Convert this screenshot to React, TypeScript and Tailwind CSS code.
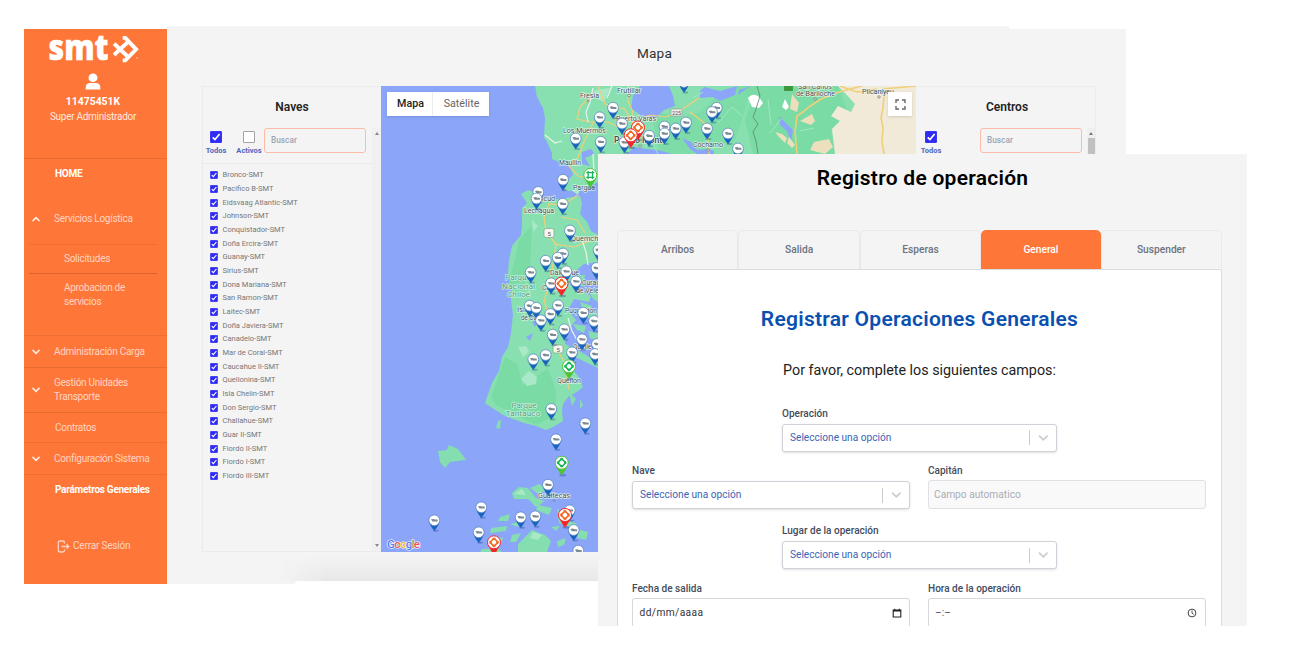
import React from "react";

const ships = [
  "Bronco-SMT", "Pacifico B-SMT", "Eidsvaag Atlantic-SMT", "Johnson-SMT", "Conquistador-SMT",
  "Doña Ercira-SMT", "Guanay-SMT", "Sirius-SMT", "Dona Mariana-SMT", "San Ramon-SMT", "Laitec-SMT",
  "Doña Javiera-SMT", "Canadelo-SMT", "Mar de Coral-SMT", "Caucahue II-SMT", "Quellonina-SMT",
  "Isla Chelin-SMT", "Don Sergio-SMT", "Challahue-SMT", "Guar II-SMT", "Fiordo II-SMT", "Fiordo I-SMT",
  "Fiordo III-SMT",
];

const pins: [number, number][] = [
  [684, 82], [613, 107.7], [716.7, 107.7], [712, 112], [599.7, 117.3], [622, 123.5], [686, 122.5],
  [664.5, 126.5], [675.7, 128.5], [707, 128.5], [664.5, 133.5], [728, 133.5], [649, 135.7],
  [575.7, 138.5], [600.7, 141.8], [624.5, 142.3], [738, 148.5], [563, 179.7], [538.3, 192],
  [536.5, 198.5], [562.7, 203.7], [570, 230.5], [598.5, 250], [563, 253.5], [557.7, 257.7],
  [545.7, 260.7], [596.5, 268], [566.3, 271.3], [530.7, 272.3], [576, 281.3], [551, 283.3],
  [558, 305.3], [529.7, 305.7], [536.3, 307.7], [583.3, 312.7], [550.3, 314], [541, 320.3],
  [594, 321], [564.3, 329.3], [552.7, 334.7], [582, 339.3], [597, 344], [572, 352.3], [595, 354],
  [545.7, 355], [533.3, 359.3], [551.3, 409], [585.3, 423.3], [556, 439.3], [548, 484.7],
  [481.3, 507.3], [569.7, 510.3], [535.3, 516.3], [520.7, 517.3], [434.3, 520.3], [573.7, 530],
  [478.7, 532.3], [578.3, 550.7],
];

const bigPins: [number, number, string][] = [
  [638, 127.5, "red"], [630.7, 135.3, "red"], [561.5, 283.5, "red"], [565, 515, "red"],
  [494, 542.3, "red"], [569, 366.3, "green"], [561.7, 462.7, "green"], [590.3, 175, "square"],
];

const labels: [number, number, string, number][] = [
  [580, 98, "Fresia", 19], [617, 93, "Frutillar", 24], [563, 133, "Los Muermos", 43],
  [616, 121, "Puerto Varas", 40], [559, 165, "Maullin", 22], [573, 190, "Pargua", 22],
  [535, 201, "Ancud", 20], [524, 213, "Lechagua", 30], [571, 241, "Quemchi", 29],
  [550, 275, "Dalcahue", 29], [542, 290, "Castro", 20], [582, 285, "Curaco", 22],
  [576, 293, "de Velez", 26], [517, 312, "Isla", 12], [521, 320, "de Cucao", 26],
  [565, 313, "Puqueldon", 32], [573, 349, "Queilen", 22], [557, 383, "Quellon", 24],
  [538, 498, "Guaitecas", 32], [693, 147, "Cochamo", 30], [798, 88.5, "San Carlos", 34],
  [796, 96, "de Bariloche", 39], [862, 94, "Pilcaniyeu", 32],
];

function Pin({ x, y }: { x: number; y: number }) {
  return (
    <g transform={`translate(${x} ${y})`}>
      <ellipse cx="1.5" cy="10.5" rx="3" ry="1" fill="#26437a" opacity=".35" />
      <path d="M-5.5 1Q-4.5 5 0 10.8Q4.5 5 5.5 1Z" fill="#1763bd" />
      <circle r="5.4" fill="#fff" stroke="#5d89c2" strokeWidth=".8" />
      <path d="M-3.4 -1L-1 -1.4L1 -.8L3.4 -.8V1.2H-1.8Z" fill="#7c8a91" />
    </g>
  );
}

function BigPin({ x, y, kind }: { x: number; y: number; kind: string }) {
  const edge = kind === "red" ? "#f3262b" : "#4cc437";
  const mark = kind === "red" ? "#f26922" : "#13b657";
  return (
    <g transform={`translate(${x} ${y})`}>
      <ellipse cx="1" cy="12.5" rx="3.5" ry="1.2" fill="#26437a" opacity=".35" />
      <path d="M-6.6 1Q-5 6 0 12.8Q5 6 6.6 1Z" fill={edge} />
      <circle r="6.5" fill="#fff" stroke={edge} strokeWidth="1" />
      {kind === "square" ? (
        <path d="M-2.2 -4V4M2.2 -4V4M-4 -2.4H4M-4 2.4H4" stroke={mark} strokeWidth="1.3" fill="none" />
      ) : (
        <g fill="none" stroke={mark}>
          <path d="M0 -4L4 0L0 4L-4 0Z" strokeWidth="1.6" />
          <path d="M-3.4 -1.4V1.4M3.4 -1.4V1.4M-1.4 -3.4H1.4M-1.4 3.4H1.4" strokeWidth="2" />
        </g>
      )}
    </g>
  );
}

function MapDrawing() {
  return (
    <svg className="block h-[466px] w-[535px]" viewBox="381 86 535 466">
      <rect x="381" y="86" width="535" height="466" fill="#8ba5f9" />
      <path d="M535 86L537 97L543 108L545 118L544 137L547 142L552 153L552 159L559 162L566 160L570 165L573 175L567 181L560 185L566 191L583 190L598 182L612 160L840 160L916 160V86Z" fill="#88e0b0" />
      <path d="M735 86L752 100L745 120L753 154H835L831 130L848 112L838 86Z" fill="#7adba5" />
      <path d="M838 86L845 93L855 104L851 112L838 106L831 116L840 121L832 129L835 154H916V86Z" fill="#f1ead8" />
      <path d="M650 110L680 118L700 112L723 90L750 86L745 110L735 140L690 154H660Z" fill="#79dba5" opacity=".75" />
      <g fill="#8ba5f9">
        <path d="M633 96L640 86H669L673 96L675 106L664 110L656 118L643 117L631 108Z" />
        <path d="M700 91L704 87L720 91L737 86L735 95L720 101L713 97L700 98Z" />
        <path d="M627 154L634 147L647 149L658 150L672 154Z" />
        <path d="M682 138L691 142L697 150L708 149L714 151V154H697L690 149Z" />
        <path d="M779 116L786 123L793 130L791 141L787 131L780 125Z" />
        <path d="M582 152L591 149L594 153L592 155L585 158L590 166L582 164Z" />
        <path d="M739 90L752 86L746 89L738 95Z" />
      </g>
      <path d="M748 98Q753 92 759 97L763 103L759 108L752 107Z" fill="#fff" />
      <path d="M785 99L789 107L786 110L782 107Z" fill="#fff" />
      <g fill="#ecdfbc">
        <path d="M792 94L799 103L797 112L790 109Z" />
        <path d="M812 114L815 121L811 125L800 121Z" />
        <path d="M775 132L782 134L787 138L785 143L779 137Z" />
        <path d="M789 137L795 145L792 148L787 143Z" />
        <path d="M814 142L829 139L833 147L825 154L810 150Z" />
      </g>
      <path d="M521 194L528 190L536 193L541 200L552 200L566 198L580 196L582 204L580 214L587 222L591 231L598 235V249L593 251L598 262L584 264L573 273L570 285L580 290L591 296L589 302L574 299L568 310L576 320L565 333L565 344L579 351L598 362V368L573 356L570 367L578 376L583 387L577 392L569 396L563 404L562 410L563 421L553 427L546 430L536 426L524 423L513 419L503 415L491 407L485 403L492 383L499 371L502 357L508 347L511 333L513 315L511 300L512 285L508 273L509 260L512 246L521 235L522 225L522 208L527 203Z" fill="#88e0b0" />
      <path d="M508 285L515 260L519 240L532 225L530 267L518 300ZM505 357L518 365L522 385L548 369L556 390L555 415L536 425L496 405L491 397Z" fill="#7adba5" />
      <g fill="#aae9c8">
        <path d="M518 347L526 346L529 352L523 357Z" />
        <path d="M529 371L537 377L536 384L527 386L521 379Z" />
        <path d="M595 90L610 88L604 102L593 97ZM571 190L580 189L578 195Z" />
        <path d="M532 220L538 226L533 232Z" />
      </g>
      <g fill="#84deb0">
        <path d="M438 451L447 450L449 445L458 449L466 460L450 462L445 468L440 462Z" />
        <path d="M578 275L585 275L583 287L576 283ZM580 302L592 306L589 312L598 314V322L585 317ZM573 324L586 326L584 333L577 330ZM588 331L598 333V341L590 338ZM588 290H598V302L593 299Z" />
        <path d="M580 399L583 405L580 409ZM569 392L576 399L572 406ZM498 421L501 420L500 429L496 428Z" />
        <path d="M512 493L519 487L528 488L536 498L545 501L536 507L528 499L514 499ZM538 505L552 508L549 515L536 510ZM530 488L539 484L548 490L538 494Z" />
        <path d="M500 517L510 514L508 521L498 521ZM491 528L507 526L506 531L490 533ZM512 535L521 533L516 542L510 542ZM489 537L503 538L500 545L488 540ZM510 524L519 522L518 527ZM524 538L532 530L545 535L551 541L547 552H518V544Z" />
        <path d="M557 507L561 515L570 521L577 524L573 528L559 523ZM557 541L566 538L564 545L558 547ZM576 529L588 532L586 540L577 538ZM551 527L560 526L556 531ZM482 549L498 548L502 552H480Z" />
      </g>
      <path d="M533 532L542 535L538 540L530 538ZM514 494L522 489L526 495Z" fill="#aae9c8" />
      <path d="M526 337L533 333L530 341ZM532 322L540 319L535 327Z" fill="#8ba5f9" />
      <g fill="none" stroke="#f1cf7a" strokeWidth="1.2">
        <path d="M628 86V101L633 112L632 130L625 143M598 86L605 104L625 109L632 122L650 115L666 117L678 112L699 98M580 107L577 119L590 122H608L624 130M580 107L590 97M633 132L642 126M593 123L584 142L577 160L569 166L578 176L587 178M690 112L707 125L709 154M578 195L563 205L549 204L544 217L546 232L556 244L553 264L550 283L544 301L550 318L554 345L565 363L568 385L569 389M561 217L577 220L585 233M554 244L574 247L590 241" />
        <path d="M840 86L857 92L866 91L876 89L884 96L883 108L881 118L883 128L882 142L884 154M883 89L916 86M862 86L839 92L821 99L809 107L803 112L797 116L795 132L797 154" strokeWidth="1.6" />
      </g>
      <g fill="none" stroke="#e9f4ea" strokeWidth="1.2">
        <path d="M545 135L555 143L562 141M593 88L590 102L586 112L588 122M612 86L607 98M594 172L593 154M582 240L586 252L588 265M568 318L572 331L577 340L583 344" />
      </g>
      <path d="M757 86L760 96L756 109L753 117L758 124L753 132L756 141L758 154" fill="none" stroke="#5d8570" strokeWidth=".8" />
      <path d="M645 148L650 138L658 154M693 98L703 92M718 123L732 107L742 116M768 99L771 125M770 133L781 119M800 131L814 128" stroke="#9fe8c2" strokeWidth="1" fill="none" />
      <rect x="671" y="109" width="11" height="7" rx="1" fill="#eee" stroke="#89938d" strokeWidth=".6" />
      <text x="672" y="114.8" fontSize="5.5" fill="#555" fontFamily="Roboto, sans-serif" textLength="9">225</text>
      <rect x="784" y="84" width="9" height="7" rx="1" fill="#3c973e" />
      <rect x="544" y="228.5" width="10" height="9" rx="2" fill="#f5f6ef" stroke="#7d947e" strokeWidth=".6" />
      <rect x="553" y="345" width="10" height="8" rx="2" fill="#f5f6ef" stroke="#7d947e" strokeWidth=".6" />
      <text x="547.5" y="235.5" fontSize="6" fontFamily="Roboto, sans-serif" fill="#555">5</text>
      <text x="556.5" y="351.5" fontSize="6" fontFamily="Roboto, sans-serif" fill="#555">5</text>
      <g fontFamily="Roboto, sans-serif" fontSize="7" fill="#434b4d" stroke="#effaf4" strokeWidth="1.2" paintOrder="stroke">
        {labels.map(([x, y, t, w]) => (
          <text key={t} x={x} y={y} textLength={w} lengthAdjust="spacingAndGlyphs">{t}</text>
        ))}
        <text x="614" y="143" fontSize="8.5" fontWeight="500" textLength="51" lengthAdjust="spacingAndGlyphs">Puerto Montt</text>
      </g>
      <g fontFamily="Roboto, sans-serif" fontSize="8" fill="#46a07f" stroke="#d9f6e7" strokeWidth="1.2" paintOrder="stroke">
        <text x="505" y="280" textLength="26" lengthAdjust="spacingAndGlyphs">Parque</text>
        <text x="502" y="288.5" textLength="33" lengthAdjust="spacingAndGlyphs">Nacional</text>
        <text x="507" y="296.5" textLength="23" lengthAdjust="spacingAndGlyphs">Chiloé</text>
        <text x="511.5" y="407.5" textLength="25" lengthAdjust="spacingAndGlyphs">Parque</text>
        <text x="505.5" y="415.8" textLength="35" lengthAdjust="spacingAndGlyphs">Tantauco</text>
      </g>
      <g fill="#fff" stroke="#666" strokeWidth=".7">
        <circle cx="629" cy="95.5" r="1.2" /><circle cx="640" cy="146" r="1.2" /><circle cx="708" cy="150" r="1.2" />
        <circle cx="815" cy="99" r="1.2" /><circle cx="879" cy="97" r="1.2" /><circle cx="588" cy="101" r=".9" />
        <circle cx="554" cy="500.5" r=".7" />
      </g>
      {pins.map(([x, y]) => <Pin key={`${x}-${y}`} x={x} y={y} />)}
      {bigPins.map(([x, y, k]) => <BigPin key={`${x}-${y}`} x={x} y={y} kind={k} />)}
      <text x="387" y="547.5" fontSize="11.5" fontWeight="500" fontFamily="Roboto, sans-serif" textLength="33" stroke="#fff" strokeWidth="1.2" paintOrder="stroke">
        <tspan fill="#5578f0">G</tspan><tspan fill="#e4525b">o</tspan><tspan fill="#eab640">o</tspan><tspan fill="#5578f0">g</tspan><tspan fill="#4bab6c">l</tspan><tspan fill="#e4525b">e</tspan>
      </text>
    </svg>
  );
}

function Check({ small = false, on = true }: { small?: boolean; on?: boolean }) {
  return (
    <svg viewBox="0 0 12 12" className={small ? "block size-[8px] shrink-0" : "block size-[12px] shrink-0"}>
      <rect x=".5" y=".5" width="11" height="11" rx={small ? 1.2 : 0.4} fill={on ? "#2f2bf5" : "#fff"} stroke={on ? "#2f2bf5" : "#999"} strokeWidth=".9" />
      {on && <path d="M2.7 6.3L5 8.6L9.6 3" fill="none" stroke="#fff" strokeWidth="1.7" />}
    </svg>
  );
}

function Chevron({ up = false }: { up?: boolean }) {
  return (
    <svg viewBox="0 0 8 6" className="h-[6px] w-[8px] shrink-0">
      <path d={up ? "M1 4.6L4 1.6L7 4.6" : "M1 1.4L4 4.4L7 1.4"} fill="none" stroke="#ffe9df" strokeWidth="1.6" strokeLinecap="round" />
    </svg>
  );
}

function GroupRow({ className, up, children }: { className: string; up?: boolean; children: React.ReactNode }) {
  return (
    <div className={`flex items-center gap-[14px] pl-[8px] text-[#ffd3c1] ${className}`}>
      <Chevron up={up} />
      <span>{children}</span>
    </div>
  );
}

function Sidebar() {
  return (
    <aside className="mt-[3px] h-[555px] w-[143px] shrink-0 bg-[#ff7738] text-[10px] leading-[14px] tracking-[-0.27px]">
      <div className="flex h-[130px] flex-col items-center border-b border-[#e96b32] pr-[5px]">
        <svg viewBox="0 0 92 40" className="mt-[1px] h-[40px] w-[92px] overflow-visible tracking-normal">
          <text x="1.5" y="30.2" fontFamily="Open Sans, Noto Sans, sans-serif" fontWeight="800" fontSize="34.5" fill="#fff" stroke="#fff" strokeWidth=".5" textLength="60" lengthAdjust="spacingAndGlyphs">smt</text>
          <g transform="translate(-46.5 -30)" fill="none" stroke="#fff" strokeWidth="3.9">
            <path d="M122.2 37.9H124.8L135.6 49.3L124.8 60.4H122.2M113.6 43.6L119.5 49.3L113.6 55M119.5 49.3L128 41.6M119.5 49.3L128 57.2" />
          </g>
          <circle cx="90" cy="28" r=".8" fill="#ffd0bb" />
        </svg>
        <svg viewBox="0 0 16 18" className="mt-[3px] h-[17px] w-[16px]" preserveAspectRatio="none">
          <circle cx="8" cy="5.1" r="4.5" fill="#fff" />
          <path d="M.7 17.4V14.8Q1.2 10.5 5 10.5H11Q14.9 10.5 15.3 14.8V17.4Z" fill="#fff" />
        </svg>
        <div className="mt-[5px] text-[10.4px] font-bold tracking-normal text-white">11475451K</div>
        <div className="mt-[1px] text-[#ffe6dc]">Super Administrador</div>
      </div>
      <div className="flex h-[30px] items-center pl-[31px] font-bold text-white">HOME</div>
      <GroupRow up className="mt-[3px] h-[53px]">Servicios Logística</GroupRow>
      <div className="mt-[-1px] ml-[5px] w-[128px]">
        <div className="flex h-[29px] items-center border-t border-[#f36c31] pl-[35px] text-[#ffd3c1]">Solicitudes</div>
        <div className="h-[62px] border-t border-[#de642f] pt-[7px] pl-[35px] text-[#ffd3c1]">Aprobacion de<br />servicios</div>
      </div>
      <GroupRow className="h-[32px] border-t border-[#ef6e36]">Administración Carga</GroupRow>
      <GroupRow className="h-[45px] border-t border-[#e96b32]">Gestión Unidades<br />Transporte</GroupRow>
      <div className="flex h-[30px] items-center border-t border-[#e96b32] pl-[31px] text-[#ffd3c1]">Contratos</div>
      <GroupRow className="h-[32px] border-t border-[#ef6e36]">Configuración Sistema</GroupRow>
      <div className="flex h-[30px] items-center border-t border-[#ef6e36] pl-[31px] font-bold text-white">Parámetros Generales</div>
      <div className="mt-[35px] flex items-center gap-[3px] pl-[33px] tracking-[-0.18px] text-[#ffd3c1]">
        <svg viewBox="0 0 13 13" className="size-[13px]" fill="none" stroke="currentColor" strokeWidth="1.3">
          <path d="M7.5 3.5V2.8Q7.5 1 5.8 1H3Q1.3 1 1.3 2.8V10.2Q1.3 12 3 12H5.8Q7.5 12 7.5 10.2V9.5M4.5 6.5H11.5M9.5 4.3L11.8 6.5L9.5 8.7" />
        </svg>
        <span>Cerrar Sesión</span>
      </div>
    </aside>
  );
}

function SearchBox() {
  return (
    <div className="flex h-[25px] w-[102px] items-center rounded-[3px] border border-[#fdbba6] pl-[6px] text-[8.3px] font-medium text-[#9ca5b4]">Buscar</div>
  );
}

function CheckLabel({ label, on = true }: { label: string; on?: boolean }) {
  return (
    <div className="flex w-[28px] flex-col items-center gap-[3px] pt-[3px] text-[7.5px] leading-[9px] font-bold whitespace-nowrap text-[#5166bc]">
      <Check on={on} />
      <span>{label}</span>
    </div>
  );
}

function MainScreen() {
  return (
    <div className="flex h-[558px] w-[1102px] font-[Roboto,'Liberation_Sans',sans-serif]">
      <Sidebar />
      <main className="relative flex-1 bg-[#f4f4f4]">
        <div className="absolute top-0 right-0 h-[3px] w-[117px] bg-white" />
        <div className="absolute right-0 bottom-0 h-[3px] w-[831px] rounded-tl-[3px] bg-white" />
        <div className="absolute right-0 bottom-[3px] h-[26px] w-[848px] bg-linear-to-b from-transparent to-black/5 [mask-image:linear-gradient(to_right,transparent,black_50px)]" />
        <h1 className="h-[60px] pt-[17px] pr-[15px] text-center text-[13.6px] leading-[20px] tracking-[0.2px] text-[#333]">
          <span className="ml-[31px]">Mapa</span>
        </h1>
        <div className="ml-[35px] flex h-[466px] w-[894px]">
          <section className="flex w-[179px] flex-col border border-r-0 border-[#ebebeb]">
            <h2 className="h-[41px] pt-[12px] text-center text-[12px] leading-[16px] font-semibold text-[#222]">Naves</h2>
            <div className="flex flex-1">
              <div className="flex-1">
                <div className="flex h-[36px] border-b border-[#ebebeb]">
                  <div className="ml-[-1px] flex w-[62px] gap-[5px]">
                    <CheckLabel label="Todos" />
                    <CheckLabel label="Activos" on={false} />
                  </div>
                  <SearchBox />
                </div>
                <ul className="pt-[4.6px]">
                  {ships.map((s) => (
                    <li key={s} className="flex h-[13.66px] items-center gap-[4.5px] pl-[7px] text-[7.53px] leading-[10px] whitespace-nowrap text-[#777]">
                      <Check small />
                      <span>{s}</span>
                    </li>
                  ))}
                </ul>
              </div>
              <div className="flex w-[9px] flex-col items-center justify-between bg-[#f0f0f0] py-[4px]">
                <svg viewBox="0 0 4 3" className="h-[3px] w-[4px]"><path d="M0 3L2 0L4 3Z" fill="#888" /></svg>
                <svg viewBox="0 0 4 3" className="h-[3px] w-[4px]"><path d="M0 0L2 3L4 0Z" fill="#888" /></svg>
              </div>
            </div>
          </section>
          <div className="relative w-[535px] overflow-hidden">
            <MapDrawing />
            <div className="absolute top-[6px] left-[6px] flex h-[24px] w-[102px] items-center bg-white text-[10.7px] shadow-sm">
              <span className="w-[46px] border-r border-[#ececec] pl-[2px] text-center leading-[24px] font-medium text-[#222]">Mapa</span>
              <span className="flex-1 pl-[1px] text-center text-[#666]">Satélite</span>
            </div>
            <div className="absolute top-[6px] right-[4px] flex size-[24px] items-center justify-center bg-white shadow-sm">
              <svg viewBox="0 0 11 11" className="size-[11px]"><path d="M1 4V1H4M7 1H10V4M10 7V10H7M4 10H1V7" fill="none" stroke="#666" strokeWidth="1.4" /></svg>
            </div>
          </div>
          <section className="flex w-[180px] flex-col border border-l-0 border-[#ebebeb]">
            <h2 className="h-[41px] pt-[12px] pl-[3px] text-center text-[12px] leading-[16px] font-semibold text-[#222]">Centros</h2>
            <div className="flex flex-1">
              <div className="flex w-[64px] pl-[1px]"><CheckLabel label="Todos" /></div>
              <SearchBox />
              <div className="ml-auto flex w-[8px] flex-col items-center bg-[#efefef] pt-[4px]">
                <svg viewBox="0 0 4 3" className="h-[3px] w-[4px]"><path d="M0 3L2 0L4 3Z" fill="#777" /></svg>
                <div className="mt-[2.5px] h-[60px] w-[7px] bg-[#c1c1c1]" />
              </div>
            </div>
          </section>
        </div>
      </main>
    </div>
  );
}

function SelectBox({ className }: { className: string }) {
  return (
    <div className={`flex h-[28px] items-center rounded-[3px] border border-[#cfd2d8] bg-white shadow-sm ${className}`}>
      <span className="flex-1 pl-[7px] text-[10.15px] text-[#3866b5]">Seleccione una opción</span>
      <span className="h-[15px] w-px bg-[#ccc]" />
      <svg viewBox="0 0 26 10" className="h-[10px] w-[26px]">
        <path d="M9.5 3.2L13.3 6.8L17.1 3.2" fill="none" stroke="#ccc" strokeWidth="1.7" strokeLinecap="round" />
      </svg>
    </div>
  );
}

function FieldLabel({ children }: { children: React.ReactNode }) {
  return <div className="text-[10.05px] leading-[14px] font-medium text-[#434c5d]">{children}</div>;
}

function RegisterForm() {
  const tabs = ["Arribos", "Salida", "Esperas", "General", "Suspender"];
  return (
    <div className="absolute top-[154px] left-[598px] h-[472px] w-[649px] overflow-hidden bg-[#f4f4f4] pl-[19px] font-[Roboto,'Liberation_Sans',sans-serif]">
      <h1 className="h-[76px] pt-[10px] pr-[19px] text-center text-[21px] leading-[28px] font-semibold tracking-[0.26px] text-black">Registro de operación</h1>
      <div className="flex w-[605px]">
        {tabs.map((t) => (
          <div
            key={t}
            className={
              t === "General"
                ? "flex h-[39px] flex-1 items-center justify-center rounded-t-[5px] bg-[#ff7738] text-[10.2px] font-medium text-white"
                : "flex h-[39px] flex-1 items-center justify-center rounded-t-[5px] border border-b-0 border-[#e9e9ec] text-[10.2px] font-medium text-[#6b7280]"
            }
          >
            {t}
          </div>
        ))}
      </div>
      <div className="h-[370px] w-[605px] rounded-t-[2px] border border-[#dadce2] bg-white px-[14px]">
        <h2 className="pt-[35px] text-center text-[21px] leading-[28px] font-semibold tracking-[0.26px] text-[#0a50b0]">Registrar Operaciones Generales</h2>
        <p className="pt-[27px] text-center text-[14.3px] leading-[20px] text-[#222]">Por favor, complete los siguientes campos:</p>
        <div className="mx-auto mt-[27px] w-[275px]">
          <FieldLabel>Operación</FieldLabel>
          <SelectBox className="mt-[2.5px]" />
        </div>
        <div className="mt-[12.5px] flex gap-[18px]">
          <div className="w-[278px]">
            <FieldLabel>Nave</FieldLabel>
            <SelectBox className="mt-[3px]" />
          </div>
          <div className="w-[278px]">
            <FieldLabel>Capitán</FieldLabel>
            <div className="mt-[2px] flex h-[29px] items-center rounded-[3px] border border-[#dfe1e6] bg-[#f9f9fa] pl-[5px] text-[10.2px] text-[#a9adb5]">Campo automatico</div>
          </div>
        </div>
        <div className="mx-auto mt-[15px] w-[275px]">
          <FieldLabel>Lugar de la operación</FieldLabel>
          <SelectBox className="mt-[3px]" />
        </div>
        <div className="mt-[12.5px] flex gap-[18px]">
          <div className="w-[278px]">
            <FieldLabel>Fecha de salida</FieldLabel>
            <div className="mt-[2.5px] flex h-[30px] items-center justify-between rounded-[3px] border border-[#d5d7dd] pr-[7px] pl-[6.5px] text-[10.2px] tracking-[0.4px] text-[#333]">
              <span>dd/mm/aaaa</span>
              <svg viewBox="0 0 10 10" className="size-[10px]"><path d="M1.2 2H8.8V9H1.2ZM1.2 3H8.8M2.7 .7V2M7.3 .7V2" fill="none" stroke="#222" strokeWidth="1.1" /></svg>
            </div>
          </div>
          <div className="w-[278px]">
            <FieldLabel>Hora de la operación</FieldLabel>
            <div className="mt-[2.5px] flex h-[30px] items-center justify-between rounded-[3px] border border-[#d5d7dd] pr-[8px] pl-[6px] text-[10.2px] text-[#555]">
              <span>–:–</span>
              <svg viewBox="0 0 10 10" className="size-[10px]" fill="none" stroke="#444"><circle cx="5" cy="5" r="3.9" strokeWidth="1" /><path d="M5 2.5V5.2L6.8 6.3" strokeWidth=".9" /></svg>
            </div>
          </div>
        </div>
      </div>
    </div>
  );
}

export default function App() {
  return (
    <div className="relative h-[650px] w-[1300px] overflow-hidden bg-white pt-[26px] pl-[24px]">
      <MainScreen />
      <RegisterForm />
    </div>
  );
}
